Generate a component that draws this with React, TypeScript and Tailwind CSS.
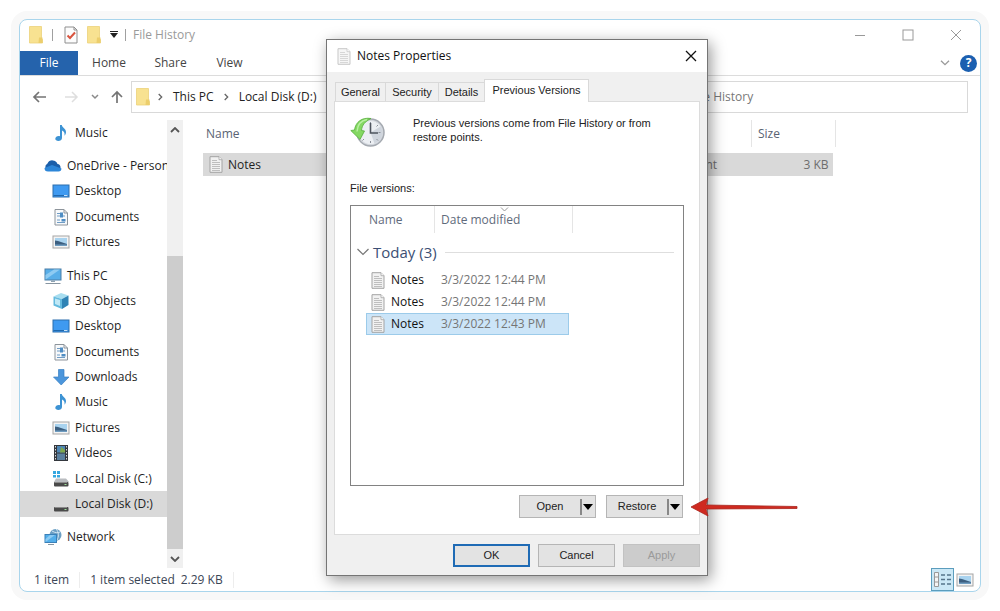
import type { ReactNode } from 'react';

const FolderIcon = () => (
  <svg className="shrink-0" width="16" height="20" viewBox="0 0 16 20">
    <path d="M1.500 1.500h12v13h1v3.500h-13z" fill="#f8e291" stroke="#ecd27a" strokeWidth=".8" />
    <path d="M11 12.500h3.500V18h-4z" fill="#ecce6c" />
  </svg>
);

const CheckDocIcon = () => (
  <svg className="shrink-0" width="14" height="18" viewBox="0 0 14 18">
    <path d="M1 1h9l3 3v13H1z" fill="#fcfcfc" stroke="#8f8f8f" />
    <path d="M10 1v3h3" fill="none" stroke="#8f8f8f" />
    <path d="M3.500 9.500l2.500 2.500 5-5.500" fill="none" stroke="#d9543f" strokeWidth="2" />
  </svg>
);

const NoteIcon = () => (
  <svg className="shrink-0" width="14" height="17" viewBox="0 0 14 17">
    <path d="M1 .700h9l3 3v12.600H1z" fill="#f1f1f1" stroke="#a3a3a3" />
    <path d="M10 .700v3h3" fill="#fff" stroke="#a3a3a3" strokeWidth=".8" />
    <path d="M3 4.500h5M3 6.500h8M3 8.500h8M3 10.500h8M3 12.500h8M3 14.500h8" stroke="#b8b8b8" strokeWidth=".9" />
  </svg>
);

const MusicIcon = () => (
  <svg width="18" height="18" viewBox="0 0 18 18">
    <path
      d="M8 1h1.800c.4 2.500 4.200 3.500 4.200 7 0 1.800-.8 3-1.500 3.800.5-2.900-.7-4.500-2.500-5.300V14c0 1.800-1.800 3-3.700 3-1.700 0-3-.9-3-2.200 0-1.600 1.600-2.800 3.300-2.800.5 0 1 .1 1.400.200z"
      fill="#3d93d4"
    />
  </svg>
);

const CloudIcon = () => (
  <svg width="18" height="18" viewBox="0 0 18 18">
    <path d="M4.500 14A4 4 0 0 1 3.500 6.500 5.400 5.400 0 0 1 13.500 7 3.600 3.600 0 0 1 14 14z" fill="#1b5faa" />
    <path d="M4 14.500A3.500 3.500 0 0 1 .5 11L8 8l9.500 3.500a3.200 3.200 0 0 1-3.500 3z" fill="#2d86d8" />
  </svg>
);

const DesktopIcon = () => (
  <svg width="18" height="18" viewBox="0 0 18 18">
    <rect x="1" y="3" width="16" height="12" fill="#3f9af1" stroke="#2d6fae" />
    <path d="M1.500 13.500h15" stroke="#1f68ad" />
    <path d="M12 13.500h3.500" stroke="#c6e2fa" />
  </svg>
);

const DocumentIcon = () => (
  <svg width="18" height="18" viewBox="0 0 18 18">
    <path d="M3 1.500h9l3.500 3.500v12H3z" fill="#f7f9fb" stroke="#8d949b" />
    <path d="M12 1.500V5h3.500" fill="none" stroke="#8d949b" />
    <path d="M5 5.500h5M5 8h8M5 14.500h8M5 12h3" stroke="#6f9cc5" strokeWidth="1.200" />
    <path d="M8 4.500h3v5H8zM9.500 11h4v2.500h-4z" fill="#4f8dc4" />
  </svg>
);

const PictureIcon = () => (
  <svg width="18" height="18" viewBox="0 0 18 18">
    <rect x="1" y="3" width="16" height="12" fill="#f4f4f4" stroke="#a5a5a5" />
    <rect x="3" y="5" width="12" height="8" fill="#a9d3ef" />
    <path d="M3 7.500c4 .5 8 2 12 3.500v2H3z" fill="#3c5f80" />
    <path d="M3 11.500h12V13H3z" fill="#6e9cc0" />
  </svg>
);

const ComputerIcon = () => (
  <svg width="18" height="18" viewBox="0 0 18 18">
    <rect x="1" y="2" width="16" height="11" fill="#58aee8" stroke="#4b7fa8" />
    <path d="M1.500 12.500L16 2.500h-6L1.500 8z" fill="#8ecbf2" />
    <path d="M7 13.500h4v1.500H7z" fill="#8fa3b2" />
    <path d="M1.500 16.500h15" stroke="#8795a1" />
  </svg>
);

const CubeIcon = () => (
  <svg width="18" height="18" viewBox="0 0 18 18">
    <path d="M1.500 4.500L9 1l7.500 2.500L10 7z" fill="#a8def0" />
    <path d="M1.500 4.500L10 7v10l-8.500-3.500z" fill="#64bade" />
    <path d="M10 7l6.500-3.500V13L10 17z" fill="#2e83b5" />
    <path d="M3 6.500l5 1.500v6l-5-2z" fill="#bfe8f6" />
  </svg>
);

const DownloadIcon = () => (
  <svg width="18" height="18" viewBox="0 0 18 18">
    <path d="M6.500 1.500h5.500v7.500h5l-7.800 8L1.500 9h5z" fill="#4b96dc" stroke="#3a7fc2" strokeWidth=".7" />
  </svg>
);

const VideoIcon = () => (
  <svg width="18" height="18" viewBox="0 0 18 18">
    <rect x="2" y="1" width="14" height="16" fill="#33373d" />
    <rect x="5" y="2" width="8" height="6.500" fill="#4e86b4" />
    <rect x="5" y="9.500" width="8" height="6.500" fill="#5a7f9e" />
    <path d="M9 3l4 3v2.500H8z" fill="#7fa84c" />
    <path d="M3.500 2v14M14.500 2v14" stroke="#d8d8d8" strokeDasharray="1.500 1.500" />
  </svg>
);

const DriveIcon = ({ system }: { system?: boolean }) => (
  <svg width="18" height="18" viewBox="0 0 18 18">
    {system && (
      <>
        <path d="M1 1h3v3H1zM5 1h3v3H5zM1 5h3v2.500H1zM5 5h3v2.500H5z" fill="#35a7e0" />
        <path d="M4 8.500h10l3 3.500H2z" fill="#b9bcc0" />
      </>
    )}
    <rect x="2" y="12" width="14.500" height="4.500" rx="1" fill="#4a4a4a" />
    <path d="M3 12.500h12" stroke="#8b8b8b" />
    <path d="M12.500 14.500h2" stroke="#9fe09b" />
  </svg>
);

const NetworkIcon = () => (
  <svg width="18" height="18" viewBox="0 0 18 18">
    <circle cx="11.500" cy="7" r="6" fill="#6c9fc4" />
    <path d="M8 3c3 2 6 2 8 1M12 1c3 3 3 8 1 11" fill="none" stroke="#d2e6f3" />
    <rect x="1" y="6.500" width="11.500" height="8" fill="#53aeea" stroke="#3a80b8" />
    <path d="M1.500 14L11 7H6l-4.500 4z" fill="#8ccbf3" />
    <path d="M4 16.500h6" stroke="#8596a3" />
  </svg>
);

const RestoreClockIcon = () => (
  <svg className="shrink-0" width="36" height="34" viewBox="0 0 36 34">
    <circle cx="20.500" cy="16.500" r="13.500" fill="#d3d7dd" stroke="#a4a9b0" strokeWidth="1.500" />
    <circle cx="20.500" cy="16.500" r="11.500" fill="#eceff3" />
    <path d="M20.500 16.500l10-6a11.500 11.500 0 0 1-6 17z" fill="#cfd5dd" />
    <path
      d="M20.500 6v2M20.500 25v2M30.500 16.500h-2M12.500 24.500l1.500-1.500M28 24.500L26.500 23M28 9L26.500 10.500"
      stroke="#8a8f98"
    />
    <path d="M20.500 7v10H28" fill="none" stroke="#4e545e" strokeWidth="1.600" />
    <path d="M21 2.500C12 1 5.500 6 4.500 14L.8 14.500 10 23.500 14.500 15l-3-.5C12 9 15 5.500 21 2.500z" fill="#84d862" stroke="#55ae3b" strokeWidth=".8" />
    <path d="M17 3.500C11 4.500 7.500 9 7 15.500" fill="none" stroke="#b9efa2" strokeWidth="1.500" />
  </svg>
);

const Chevron = () => (
  <svg className="shrink-0" width="5" height="8" viewBox="0 0 5 8">
    <path d="M.700 1l3 3-3 3" fill="none" stroke="#666" strokeWidth="1.300" />
  </svg>
);

const Caret = () => (
  <svg width="10" height="6" viewBox="0 0 10 6">
    <path d="M0 0h10L5 6z" fill="#000" />
  </svg>
);

type NavEntry = { label: string; icon: ReactNode; root?: boolean; active?: boolean; gap?: boolean };

const navEntries: NavEntry[] = [
  { label: 'Music', icon: <MusicIcon /> },
  { label: 'OneDrive - Person', icon: <CloudIcon />, root: true, gap: true },
  { label: 'Desktop', icon: <DesktopIcon /> },
  { label: 'Documents', icon: <DocumentIcon /> },
  { label: 'Pictures', icon: <PictureIcon /> },
  { label: 'This PC', icon: <ComputerIcon />, root: true, gap: true },
  { label: '3D Objects', icon: <CubeIcon /> },
  { label: 'Desktop', icon: <DesktopIcon /> },
  { label: 'Documents', icon: <DocumentIcon /> },
  { label: 'Downloads', icon: <DownloadIcon /> },
  { label: 'Music', icon: <MusicIcon /> },
  { label: 'Pictures', icon: <PictureIcon /> },
  { label: 'Videos', icon: <VideoIcon /> },
  { label: 'Local Disk (C:)', icon: <DriveIcon system /> },
  { label: 'Local Disk (D:)', icon: <DriveIcon />, active: true },
  { label: 'Network', icon: <NetworkIcon />, root: true, gap: true },
];

const versions = [
  { name: 'Notes', date: '3/3/2022 12:44 PM' },
  { name: 'Notes', date: '3/3/2022 12:44 PM' },
  { name: 'Notes', date: '3/3/2022 12:43 PM', selected: true },
];

const TitleBar = () => (
  <header className="flex h-[31px] items-center pb-[2px] pl-2 text-[#9a9a9a]">
    <FolderIcon />
    <span className="mx-2 h-3 w-px bg-[#a0a0a0]" />
    <span className="ml-[3px] flex items-center gap-2">
      <CheckDocIcon />
      <FolderIcon />
    </span>
    <button aria-label="Customize toolbar" className="ml-2 flex flex-col items-center gap-px">
      <span className="h-px w-2 bg-[#222]" />
      <svg width="8" height="5" viewBox="0 0 8 5">
        <path d="M0 0h8L4 5z" fill="#222" />
      </svg>
    </button>
    <span className="mx-[7px] h-3 w-px bg-[#a0a0a0]" />
    <span>File History</span>
    <div className="ml-auto flex items-center pr-[18px]">
      <button aria-label="Minimize" className="mr-9">
        <svg width="12" height="12" viewBox="0 0 12 12">
          <path d="M1 6.500h10" stroke="#999" />
        </svg>
      </button>
      <button aria-label="Maximize" className="mr-9">
        <svg width="12" height="12" viewBox="0 0 12 12">
          <rect x="1" y="1" width="10" height="10" fill="none" stroke="#999" />
        </svg>
      </button>
      <button aria-label="Close">
        <svg width="12" height="12" viewBox="0 0 12 12">
          <path d="M1 1l10 10M11 1L1 11" stroke="#999" />
        </svg>
      </button>
    </div>
  </header>
);

const Ribbon = () => (
  <div className="flex h-[25px] items-stretch border-b border-[#dcdcdc] text-[#444]">
    <button className="w-[58px] bg-[#2563ac] text-white">File</button>
    <button className="w-[62px]">Home</button>
    <button className="w-[61px]">Share</button>
    <button className="w-[57px]">View</button>
    <div className="ml-auto flex items-center gap-[10px] pr-[3px]">
      <button aria-label="Expand ribbon">
        <svg width="10" height="6" viewBox="0 0 10 6">
          <path d="M1 .700l4 4 4-4" fill="none" stroke="#9a9a9a" strokeWidth="1.300" />
        </svg>
      </button>
      <button
        aria-label="Help"
        className="flex size-[17px] items-center justify-center rounded-full bg-[#1b5fb0] text-xs font-bold text-white">
        ?
      </button>
    </div>
  </div>
);

const AddressBar = () => (
  <div className="flex h-11 items-center pr-3 pb-[3px] pl-3">
    <button aria-label="Back">
      <svg width="16" height="14" viewBox="0 0 16 14">
        <path d="M14 7H2.500M7 2L2 7l5 5" fill="none" stroke="#747474" strokeWidth="1.700" />
      </svg>
    </button>
    <button aria-label="Forward" className="ml-[15px]">
      <svg width="16" height="14" viewBox="0 0 16 14">
        <path d="M2 7h11.500M9 2l5 5-5 5" fill="none" stroke="#dedede" strokeWidth="1.500" />
      </svg>
    </button>
    <button aria-label="Recent locations" className="ml-3">
      <svg width="8" height="6" viewBox="0 0 8 6">
        <path d="M1 1l3 3 3-3" fill="none" stroke="#8a8a8a" strokeWidth="1.500" />
      </svg>
    </button>
    <button aria-label="Up" className="ml-[11px]">
      <svg width="14" height="14" viewBox="0 0 14 14">
        <path d="M7 13V2.500M2 7l5-5 5 5" fill="none" stroke="#747474" strokeWidth="1.700" />
      </svg>
    </button>
    <div className="ml-[7px] flex h-8 flex-1 items-center gap-[10px] border border-[#d9d9d9] pl-[3px] text-[#222]">
      <span className="flex items-center gap-[7px]">
        <FolderIcon />
        <Chevron />
      </span>
      <a href="#this-pc">This PC</a>
      <Chevron />
      <a href="#disk-d">Local Disk (D:)</a>
    </div>
    <input
      type="search"
      aria-label="Search File History"
      placeholder="Search File History"
      className="ml-2 h-8 w-[340px] border border-[#d9d9d9] pl-[21px] placeholder:text-[#777]"
    />
  </div>
);

const Sidebar = () => (
  <div className="flex w-[164px] shrink-0">
    <nav className="flex h-[430px] w-[147px] flex-col overflow-hidden text-[#1f1f1f]">
      {navEntries.map((entry, index) => (
        <a
          href={`#item-${index}`}
          key={index}
          className={`flex flex-1 items-center gap-[5px] whitespace-nowrap ${entry.root ? 'pl-6' : 'pl-8'} ${
            entry.gap ? 'mt-2' : ''
          } ${entry.active ? 'bg-[#d9d9d9]' : ''}`}>
          <span className="shrink-0">{entry.icon}</span>
          {entry.label}
        </a>
      ))}
    </nav>
    <div className="flex w-4 flex-col items-center bg-[#f0f0f0]">
      <button aria-label="Scroll up" className="flex h-[136px] pt-[7px]">
        <svg width="10" height="6" viewBox="0 0 10 6">
          <path d="M1 5l4-4 4 4" fill="none" stroke="#555" strokeWidth="1.800" />
        </svg>
      </button>
      <div className="w-full flex-1 bg-[#cdcdcd]" />
      <button aria-label="Scroll down" className="flex h-[19px] items-center">
        <svg width="10" height="6" viewBox="0 0 10 6">
          <path d="M1 1l4 4 4-4" fill="none" stroke="#555" strokeWidth="1.800" />
        </svg>
      </button>
    </div>
  </div>
);

const FileTable = () => (
  <div className="min-w-0 flex-1 pl-[19px]">
    <table className="w-[633px] table-fixed text-left">
      <thead>
        <tr className="h-[27px] text-[#596373]">
          <th className="pl-[3px] font-normal">Name</th>
          <th className="w-[130px] border-r border-[#e5e5e5]" />
          <th className="w-[84px] border-r border-[#e5e5e5] pl-[6px] font-normal">Size</th>
        </tr>
      </thead>
      <tbody>
        <tr className="h-[6px]" />
        <tr className="h-[23px] text-[#6d6d6d]">
          <td className="bg-[#d9d9d9] p-0 pl-[6px] text-[#1f1f1f]">
            <span className="flex items-center gap-[5px]">
              <NoteIcon />
              Notes
            </span>
          </td>
          <td className="bg-[#d9d9d9] p-0 pl-[10px]">Text Document</td>
          <td className="p-0 pr-[3px]">
            <span className="flex h-[23px] items-center justify-end bg-[#d9d9d9] pr-1">3 KB</span>
          </td>
        </tr>
      </tbody>
    </table>
  </div>
);

const StatusBar = () => (
  <footer className="flex h-[23px] items-center pr-[6px] pl-[14px] text-[#3b4656]">
    <span className="border-r border-[#ededed] pr-[10px]">1 item</span>
    <span className="pl-[10px]">1 item selected</span>
    <span className="border-r border-[#ededed] pr-[10px] pl-[6px]">2.29 KB</span>
    <div className="ml-auto flex items-center gap-[2px]">
      <button
        aria-label="Details view"
        className="flex size-[23px] items-center justify-center border border-[#5b9dbd] bg-[#cbe8f6]">
        <svg width="17" height="15" viewBox="0 0 17 15">
          <path d="M.500.500h4v14h-4zM.500 5h4M.500 10h4" fill="#f5f5f5" stroke="#999" />
          <path d="M7 3h4M13 3h4M7 7.500h4M13 7.500h4M7 12h4M13 12h4" stroke="#56748a" strokeWidth="1.300" />
        </svg>
      </button>
      <button aria-label="Thumbnail view">
        <PictureIcon />
      </button>
    </div>
  </footer>
);

const SplitButton = ({ label }: { label: string }) => (
  <div className="flex h-[23px] w-[77px] items-center border border-[#b5b5b5] bg-[#e3e3e3]">
    <button className="flex-1">{label}</button>
    <button aria-label={`${label} options`} className="mr-[2px] flex h-4 items-center border-l-2 border-[#888] pl-px">
      <Caret />
    </button>
  </div>
);

const VersionList = () => (
  <div className="h-[281px] border border-[#828282] bg-white font-['Open_Sans',sans-serif] text-xs">
    <div className="flex h-[27px] items-center text-[#5f6b7c]">
      <span className="flex h-full w-[84px] items-center border-r border-[#e5e5e5] pl-[18px]">Name</span>
      <span className="relative flex h-full w-[138px] items-center border-r border-[#e5e5e5] pl-[6px]">
        Date modified
        <svg className="absolute top-px left-[65px]" width="9" height="5" viewBox="0 0 9 5">
          <path d="M1 .500l3.500 3.500L8 .500" fill="none" stroke="#999" />
        </svg>
      </span>
    </div>
    <div className="mt-[7px] flex h-6 items-center pr-[9px] pl-[6px] text-[#3c4f74]">
      <svg width="12" height="8" viewBox="0 0 12 8">
        <path d="M.500 1L6 6.500 11.500 1" fill="none" stroke="#777" strokeWidth="1.200" />
      </svg>
      <h2 className="ml-1 text-[15px]">Today (3)</h2>
      <span className="ml-2 h-px flex-1 bg-[#dedede]" />
    </div>
    <ul className="mt-[5px] ml-[15px] w-[203px]">
      {versions.map((version, index) => (
        <li
          key={index}
          className={`flex h-[22px] items-center border pl-1 ${
            version.selected ? 'border-[#9ccbea] bg-[#cce5f8]' : 'border-transparent'
          }`}>
          <NoteIcon />
          <span className="ml-[6px] w-[50px] text-[#111]">{version.name}</span>
          <span className="whitespace-nowrap text-[#757575]">{version.date}</span>
        </li>
      ))}
    </ul>
  </div>
);

const PropertiesDialog = () => (
  <section
    role="dialog"
    aria-label="Notes Properties"
    className="absolute top-[19px] left-[306px] w-[382px] border border-[#757575] bg-[#f0f0f0] font-['Liberation_Sans',sans-serif] text-[11px] text-[#222] shadow-[3px_4px_14px_rgba(0,0,0,0.4)]">
    <div className="flex h-8 items-center bg-white pr-[10px] pl-[10px] font-['Open_Sans',sans-serif] text-xs">
      <span className="opacity-60">
        <NoteIcon />
      </span>
      <h1 className="ml-[6px] text-[#111]">Notes Properties</h1>
      <button aria-label="Close dialog" className="ml-auto">
        <svg width="12" height="12" viewBox="0 0 12 12">
          <path d="M1 1l10 10M11 1L1 11" stroke="#111" strokeWidth="1.300" />
        </svg>
      </button>
    </div>
    <div className="px-[7px] pt-[7px] pb-[8px]">
      <div role="tablist" className="flex h-[22px] items-end pl-px">
        <button role="tab" className="h-[19px] w-[51px] border border-b-0 border-[#d9d9d9]">
          General
        </button>
        <button role="tab" className="h-[19px] w-[53px] border-t border-r border-[#d9d9d9]">
          Security
        </button>
        <button role="tab" className="h-[19px] w-[45px] border-t border-[#d9d9d9]">
          Details
        </button>
        <button
          role="tab"
          aria-selected="true"
          className="-mb-px h-[23px] w-[105px] border border-b-0 border-[#d9d9d9] bg-white pb-[2px]">
          Previous Versions
        </button>
      </div>
      <div className="border border-[#dcdcdc] bg-white px-[15px] pt-[14px] pb-4">
        <div className="flex h-[64px] items-start">
          <RestoreClockIcon />
          <p className="ml-[27px] leading-[14px]">
            Previous versions come from File History or from
            <br />
            restore points.
          </p>
        </div>
        <p className="mt-px mb-[10px] leading-[14px]">File versions:</p>
        <VersionList />
        <div className="mt-[9px] flex justify-end gap-[10px] pr-px">
          <SplitButton label="Open" />
          <SplitButton label="Restore" />
        </div>
      </div>
      <div className="mt-[9px] flex justify-end gap-2">
        <button className="h-[23px] w-[77px] border-2 border-[#1f6bb5] bg-[#e3e3e3]">OK</button>
        <button className="h-[23px] w-[77px] border border-[#b5b5b5] bg-[#e3e3e3]">Cancel</button>
        <button disabled className="h-[23px] w-[77px] border border-[#c2c2c2] bg-[#cccccc] text-[#9a9a9a]">
          Apply
        </button>
      </div>
    </div>
  </section>
);

const App = () => {
  return (
    <main className="bg-white p-[19px] font-['Open_Sans',sans-serif] text-xs">
      <div className="relative rounded-lg border border-[#a9d5ec] bg-white shadow-[0_0_0_8px_#f8f8f8]">
        <TitleBar />
        <Ribbon />
        <AddressBar />
        <div className="flex h-[448px]">
          <Sidebar />
          <FileTable />
        </div>
        <StatusBar />
        <PropertiesDialog />
        <svg className="absolute top-[477px] left-[670px]" width="109" height="20" viewBox="0 0 109 20">
          <path d="M1 10L18 1l-2 7 91 1.500v2L16 12l2 7z" fill="#cf2a20" stroke="#a8261e" strokeWidth=".8" />
        </svg>
      </div>
    </main>
  );
};

export default App;
